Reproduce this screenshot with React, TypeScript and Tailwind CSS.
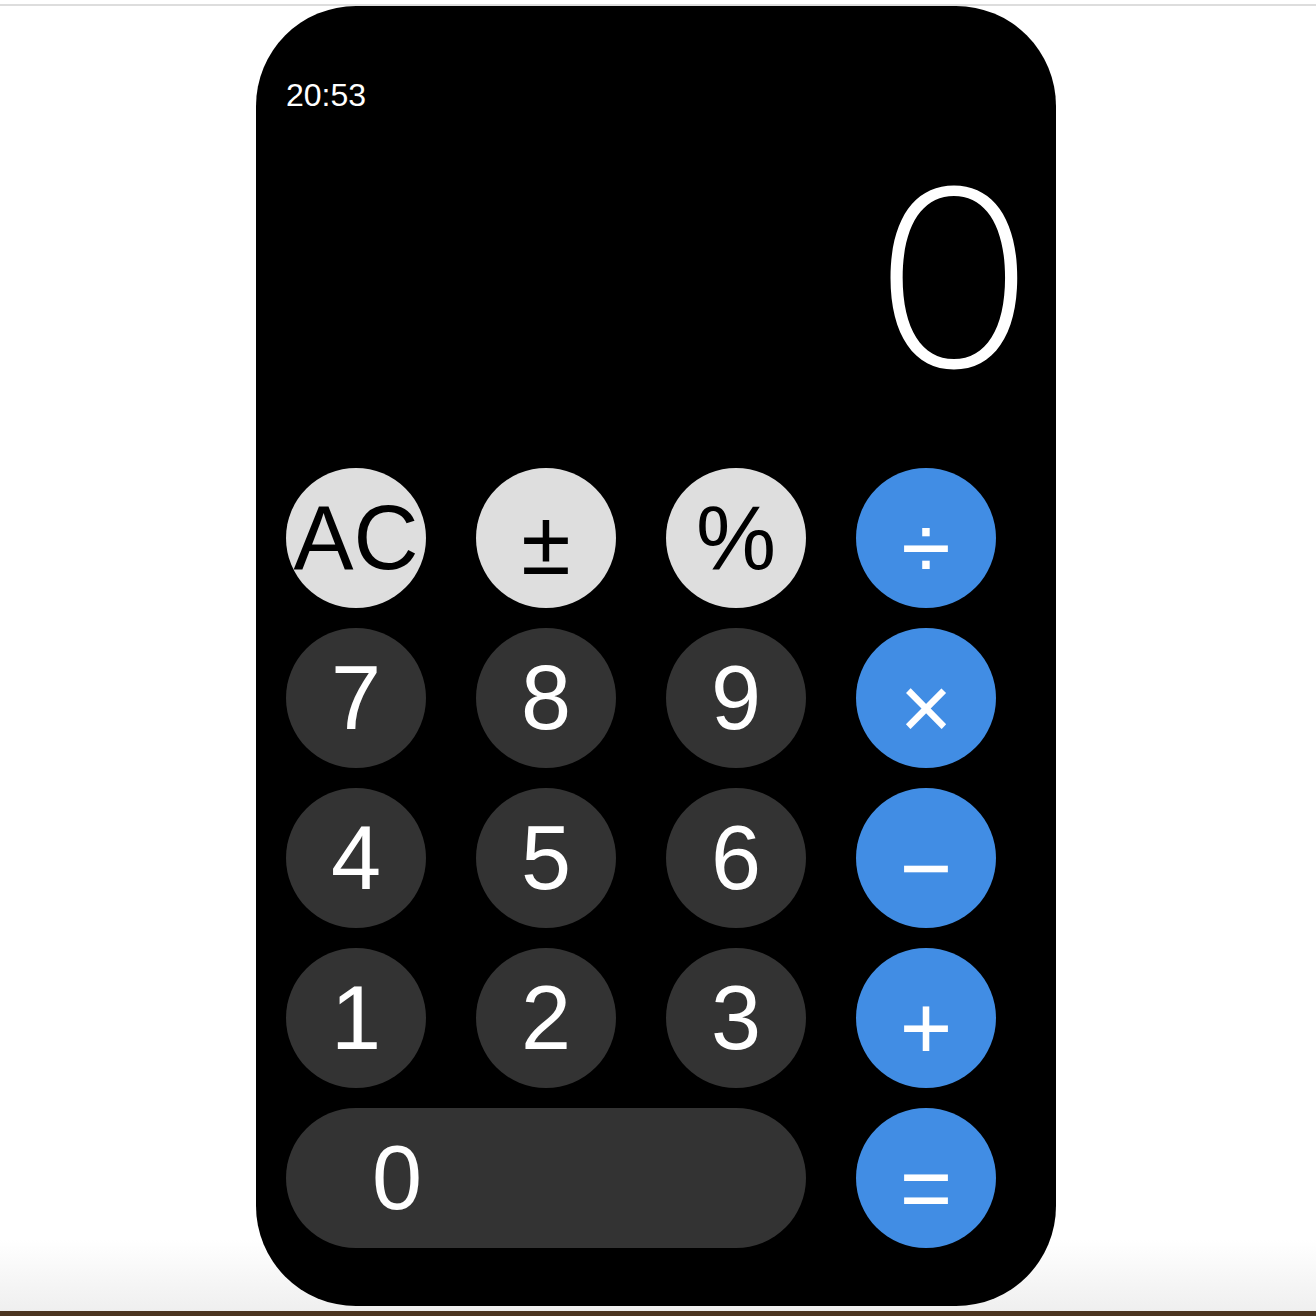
import React from "react"

type Key = {
  label: string
  kind: "fn" | "num" | "op"
  wide?: boolean
}

const keys: Key[] = [
  { label: "AC", kind: "fn" },
  { label: "±", kind: "fn" },
  { label: "%", kind: "fn" },
  { label: "÷", kind: "op" },
  { label: "7", kind: "num" },
  { label: "8", kind: "num" },
  { label: "9", kind: "num" },
  { label: "×", kind: "op" },
  { label: "4", kind: "num" },
  { label: "5", kind: "num" },
  { label: "6", kind: "num" },
  { label: "−", kind: "op" },
  { label: "1", kind: "num" },
  { label: "2", kind: "num" },
  { label: "3", kind: "num" },
  { label: "+", kind: "op" },
  { label: "0", kind: "num", wide: true },
  { label: "=", kind: "op" },
]

function CalcKey({ k }: { k: Key }) {
  if (k.wide) {
    return (
      <button className="col-span-3 h-[140px] rounded-[70px] bg-[#333333] text-white flex items-center justify-start pl-[86px] text-[90px] leading-none">
        {k.label}
      </button>
    )
  }
  if (k.kind === "fn") {
    return (
      <button
        className={`w-[140px] h-[140px] rounded-full bg-[#dedede] text-black flex items-center justify-center text-[90px] leading-none ${
          k.label === "±" ? "pt-[10px]" : ""
        }`}
      >
        {k.label}
      </button>
    )
  }
  if (k.kind === "op") {
    return (
      <button className="w-[140px] h-[140px] rounded-full bg-[#418de4] text-white flex items-center justify-center pt-[20px] text-[90px] leading-none">
        {k.label}
      </button>
    )
  }
  return (
    <button className="w-[140px] h-[140px] rounded-full bg-[#333333] text-white flex items-center justify-center text-[90px] leading-none">
      {k.label}
    </button>
  )
}

export default function App() {
  return (
    <div className="w-[1316px] h-[1316px] bg-[linear-gradient(to_bottom,#ffffff_0px,#ffffff_1240px,#efefef_1311px)] flex flex-col overflow-hidden font-['Liberation_Sans',Arial,sans-serif]">
      <div className="h-[4px]" />
      <div className="h-[2px] bg-[#dddddd]" />

      {/* phone */}
      <div className="ml-[256px] w-[800px] h-[1300px] shrink-0 rounded-[100px] bg-black flex flex-col pl-[30px] pb-[58px]">
        <div className="mt-[73px] text-white text-[32px] leading-none">20:53</div>

        <div className="mt-[44px] flex justify-end pr-[20px]">
          <span className="text-white text-[246px] leading-none font-extralight font-['Inter',sans-serif] scale-x-[1.1] origin-right">
            0
          </span>
        </div>

        <div className="mt-auto grid grid-cols-[repeat(4,140px)] gap-x-[50px] gap-y-[20px]">
          {keys.map((k) => (
            <CalcKey key={k.label} k={k} />
          ))}
        </div>
      </div>

      <div className="h-[5px]" />
      <div className="flex-1 bg-[#4b3521]" />
    </div>
  )
}
